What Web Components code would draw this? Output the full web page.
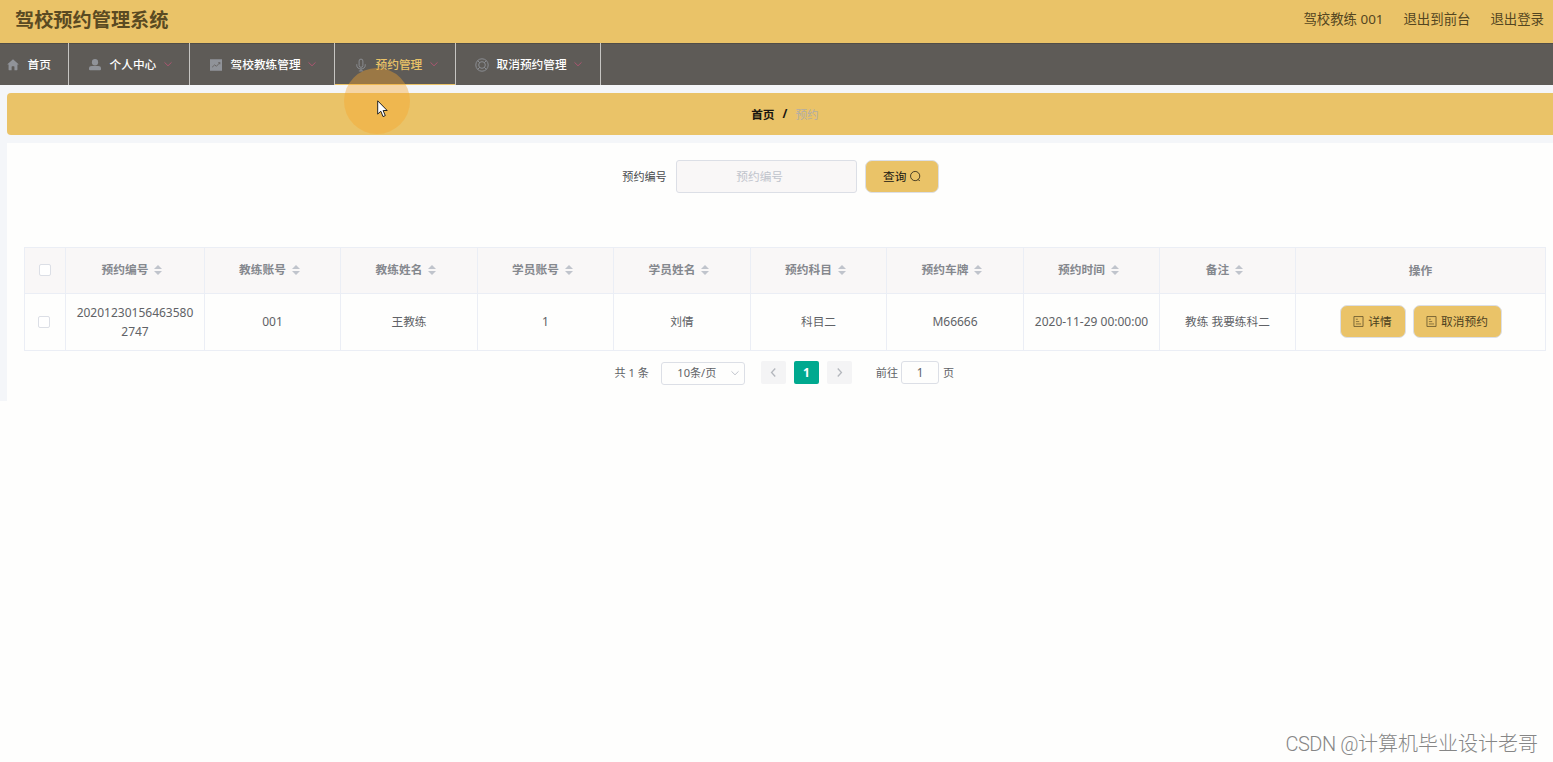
<!DOCTYPE html>
<html lang="zh-CN">
<head>
<meta charset="utf-8">
<title>驾校预约管理系统</title>
<style>
html,body{margin:0;height:100%;overflow:hidden;background:#fefefd}
body{font-family:"Noto Sans","Noto Sans CJK SC",sans-serif;font-size:11.7px;color:#606266;position:relative}
</style>
</head>
<body>
<booking-app></booking-app>
<script>
const define = (name, css, html) => {
  customElements.define(name, class extends HTMLElement {
    constructor() {
      super();
      const root = this.attachShadow({ mode: 'open' });
      const body = typeof html === 'function' ? html(this) : html;
      root.innerHTML = `<style>*{box-sizing:border-box}${css}</style>${body}`;
    }
  });
};

const icons = {
  home: '<path d="M512 30 990 440Q1010 475 970 475H890V900Q890 950 850 950H635V680Q635 625 590 625H440Q395 625 395 680V950H175Q134 950 134 900V475H54Q15 475 35 440Z" fill="currentColor"/>',
  user: '<ellipse cx="512" cy="280" rx="265" ry="280" fill="currentColor"/><path d="M0 810Q0 600 240 600H784Q1024 600 1024 810V870Q1024 960 930 960H94Q0 960 0 870Z" fill="currentColor"/>',
  chart: '<path d="M0 20H1024V1004H0Z" fill="currentColor"/><path d="M180 700 400 500 550 620 840 310M700 310H840V450" fill="none" stroke="#5e5b58" stroke-width="65"/>',
  mic: '<rect x="350" y="10" width="324" height="700" rx="162" fill="none" stroke="currentColor" stroke-width="75"/><path d="M150 450V530Q160 830 512 850Q864 830 874 530V450M512 850V1020M330 1020H694" fill="none" stroke="currentColor" stroke-width="75"/>',
  help: '<circle cx="512" cy="512" r="530" fill="none" stroke="currentColor" stroke-width="75"/><circle cx="512" cy="512" r="285" fill="none" stroke="currentColor" stroke-width="75"/><path d="M140 140 310 310M884 140 714 310M140 884 310 714M884 884 714 714" stroke="currentColor" stroke-width="75"/>',
  down: '<path d="M60 300 512 740 964 300" fill="none" stroke="currentColor" stroke-width="125"/>',
  left: '<path d="M710 60 290 512 710 964" fill="none" stroke="currentColor" stroke-width="150"/>',
  right: '<path d="M314 60 734 512 314 964" fill="none" stroke="currentColor" stroke-width="150"/>',
  search: '<circle cx="480" cy="470" r="430" fill="none" stroke="currentColor" stroke-width="70"/><path d="M760 790 900 930" stroke="currentColor" stroke-width="85"/>',
  doc: '<path d="M90 50H934V974H90Z" fill="none" stroke="currentColor" stroke-width="75"/><path d="M270 300H450M270 520H580M270 740H750" stroke="currentColor" stroke-width="65"/>'
};
define('ui-icon', ':host{display:inline-block;flex:none}svg{display:block;width:100%;height:100%;overflow:visible}',
  el => `<svg viewBox="0 0 1024 1024">${icons[el.getAttribute('name')]}</svg>`);

define('app-header', `
:host{display:flex;justify-content:space-between;height:43px;background:#eac368;padding:0 9px 0 15px;color:#5a4a22}
h1{margin:0;font-size:19.2px;line-height:40px;font-weight:700}
nav{display:flex;gap:20px;font-size:13.4px;line-height:38px;color:#544621}`,
  '<h1>驾校预约管理系统</h1><nav><slot></slot></nav>');

define('menu-item', `
:host{display:flex;align-items:center;height:42px;border-right:1px solid #c6c5c2;padding:0 0 0 20px;color:#fff;width:121px;font-weight:500;white-space:nowrap}
:host([home]){width:69px;padding-left:7px}:host([wide]){width:145px}
:host([active]){color:#eac368;box-shadow:inset 0 -1px #eac368}
.t{padding-bottom:1px}
.i{width:12px;height:12px;color:#909399;margin-right:8.5px;margin-top:2px}
.d{width:8px;height:8px;color:#ad5572;margin-left:7.5px;margin-bottom:1px}`,
  el => `<ui-icon class="i" name="${el.getAttribute('icon')}"></ui-icon><span class="t"><slot></slot></span>${el.hasAttribute('home') ? '' : '<ui-icon class="d" name="down"></ui-icon>'}`);

define('menu-bar', ':host{display:flex;height:42px;background:#5e5b57;box-shadow:inset 0 1px #504d48}', '<slot></slot>');

define('bread-crumb', `
:host{display:flex;justify-content:center;align-items:center;height:42px;background:#eac368;border-radius:4px 0 0 4px;font-weight:700;color:#181510;padding:0 0 2px 10px}
i{margin:0 8px;font-style:normal}span{color:#b0ada6;font-weight:400}`,
  '<slot></slot><i>/</i><span><slot name="current"></slot></span>');

define('gold-button', `
:host{display:flex;align-items:center;justify-content:center;height:33px;background:#eac368;border:1px solid #dcdfe6;border-radius:7px;color:#4b3f20;gap:4px}
:host([search]){color:#181510}
:host([search]) .t{padding-bottom:2px}
ui-icon{width:11px;height:11px}:host(:not([search])) ui-icon{opacity:.85}
:host([search]) ui-icon{order:2;margin-right:-1px}`,
  el => `<ui-icon name="${el.getAttribute('icon')}"></ui-icon><span class="t"><slot></slot></span>`);

define('search-form', `
:host{display:flex;justify-content:center;align-items:center;height:33px;padding-right:9px}
label{font-size:11.1px;color:#484a4e;margin-right:9px;padding-bottom:2px}
.f{width:181px;height:33px;background:#f9f7f7;border:1px solid #dcdfe6;border-radius:3px;text-align:center;line-height:31px;color:#c0c4cc;padding-right:13px;margin-right:8px}
gold-button{width:74px}`,
  '<label>预约编号</label><div class="f">预约编号</div><gold-button icon="search" search>查询</gold-button>');

define('check-box', ':host{display:block;width:12px;height:12px;border:1px solid #dcdfe6;border-radius:2px;background:#fff}', '');

define('table-cell', `
:host{display:flex;align-items:center;justify-content:center;text-align:center;border-right:1px solid #ebeef5;border-bottom:1px solid #ebeef5;line-height:19px;overflow-wrap:anywhere;padding-bottom:1px}
:host([head]){background:#f9f7f7;color:#85888e;font-weight:600}
:host([head][sort]){padding-bottom:2px}
:host([head]:not([sort])){padding-bottom:0}
:host([num]){font-size:12px}
.s{display:flex;flex-direction:column;align-items:center;gap:2px;width:20px}
.s b{border:4.3px solid transparent;border-top:0;border-bottom:4px solid #c0c4cc}.s b+b{border-top:4px solid #c0c4cc;border-bottom:0}`,
  el => `<slot></slot>${el.hasAttribute('sort') ? '<div class="s"><b></b><b></b></div>' : ''}`);

define('data-table', `
:host{display:grid;grid-template-columns:41px 139px 136px 137px 136px 137px 136px 137px 136px 136px 250px;grid-template-rows:46px 57px;border-left:1px solid #ebeef5;border-top:1px solid #ebeef5}
.id{padding:0 8px}.c1{padding-bottom:1px}.c2 check-box{margin-left:-3px}
.acts{display:flex;gap:7px}.detail{width:66px}.cancel{width:89px}`,
  () => {
    const heads = ['预约编号', '教练账号', '教练姓名', '学员账号', '学员姓名', '预约科目', '预约车牌', '预约时间', '备注'];
    const row = ['001', '王教练', '1', '刘倩', '科目二', 'M66666', '2020-11-29 00:00:00', '教练 我要练科二'];
    return `<table-cell head class="c1"><check-box></check-box></table-cell>
    ${heads.map(h => `<table-cell head sort>${h}</table-cell>`).join('')}<table-cell head>操作</table-cell>
    <table-cell class="c2"><check-box></check-box></table-cell>
    <table-cell num class="id">202012301564635802747</table-cell>
    ${row.map(t => `<table-cell${/^[\x20-\x7e]+$/.test(t) ? ' num' : ''}>${t}</table-cell>`).join('')}
    <table-cell><div class="acts"><gold-button icon="doc" class="detail">详情</gold-button><gold-button icon="doc" class="cancel">取消预约</gold-button></div></table-cell>`;
  });

define('page-nav', `
:host{display:flex;align-items:center;height:25px;font-size:11.1px;padding-left:607.5px;white-space:nowrap}
:host>span,span{padding-bottom:1px}
.box{display:flex;align-items:center;justify-content:center;border:1px solid #dcdfe6;border-radius:3px;height:23px;padding-bottom:1px}
.size{width:84px;margin:1px 16px 0 12px;padding:0 0 2px 11px}.size ui-icon{width:8px;height:8px;color:#c0c4cc;margin:2px 0 0 15px}
.p{display:flex;align-items:center;justify-content:center;width:25px;height:23px;background:#f4f4f5;color:#b4b7bd;border-radius:2px;margin-right:8px}
.p ui-icon{width:9px;height:9px}.on{background:#00a98f;color:#fff;font-weight:700;font-size:12px}
.go{width:38px;margin:0 4px 0 3px;font-size:11.7px}.lab{margin-left:16px}`,
  `<span>共 1 条</span><div class="box size">10条/页<ui-icon name="down"></ui-icon></div>
  <div class="p"><ui-icon name="left"></ui-icon></div><div class="p on">1</div><div class="p"><ui-icon name="right"></ui-icon></div>
  <span class="lab">前往</span><div class="box go">1</div><span>页</span>`);

define('mouse-pointer', `
:host{position:absolute;left:344px;top:68px;width:66px;height:66px;border-radius:50%;background:rgba(247,166,42,.4)}
svg{position:absolute;left:33px;top:32px;width:11px;height:18px}`,
  '<svg viewBox="0 0 11 18"><path d="M.7.8V14.1L3.8 11.2 6 16.6 8.3 15.6 6.1 10.5H10.2Z" fill="#fff" stroke="#222" stroke-width="1"/></svg>');

define('water-mark', `
:host{position:absolute;right:15px;top:730px;font-family:Roboto,"Noto Sans CJK SC",sans-serif;font-size:20px;line-height:28px;font-weight:300;color:#868686;white-space:nowrap}
::slotted(span){letter-spacing:-.45px}`, '<slot></slot>');

define('booking-app', `
:host{display:block}
main{background:#f4f6f9;padding:8px 0 0 7px;height:316px}
.panel{background:#fefefd;margin-top:8px;height:258px;padding:17px 7px 0 17px}
data-table{margin-top:54px}page-nav{margin:9px -7px 0 -17px}`,
  `<app-header><span>驾校教练 001</span><span>退出到前台</span><span>退出登录</span></app-header>
  <menu-bar><menu-item home icon="home">首页</menu-item><menu-item icon="user">个人中心</menu-item><menu-item wide icon="chart">驾校教练管理</menu-item><menu-item active icon="mic">预约管理</menu-item><menu-item wide icon="help">取消预约管理</menu-item></menu-bar>
  <main><bread-crumb>首页<span slot="current">预约</span></bread-crumb>
  <div class="panel"><search-form></search-form><data-table></data-table><page-nav></page-nav></div></main>
  <mouse-pointer></mouse-pointer><water-mark><span>CSDN @</span>计算机毕业设计老哥</water-mark>`);
</script>
</body>
</html>
